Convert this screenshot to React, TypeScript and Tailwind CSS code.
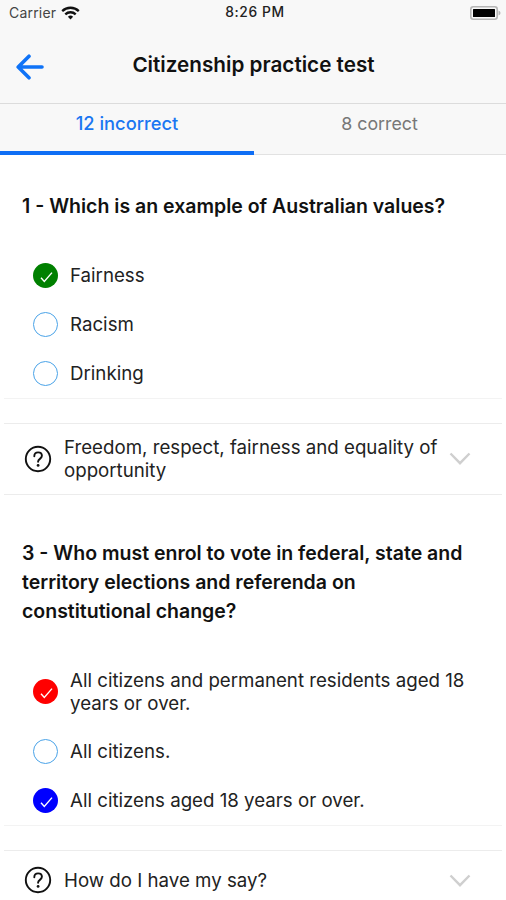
import React from "react";

type Mark = "none" | "green" | "red" | "blue";

interface Option {
  text: string;
  mark: Mark;
}

interface Question {
  id: number;
  title: string;
  options: Option[];
  hint: string;
}

const questions: Question[] = [
  {
    id: 1,
    title: "Which is an example of Australian values?",
    options: [
      { text: "Fairness", mark: "green" },
      { text: "Racism", mark: "none" },
      { text: "Drinking", mark: "none" },
    ],
    hint: "Freedom, respect, fairness and equality of opportunity",
  },
  {
    id: 3,
    title:
      "Who must enrol to vote in federal, state and territory elections and referenda on constitutional change?",
    options: [
      {
        text: "All citizens and permanent residents aged 18 years or over.",
        mark: "red",
      },
      { text: "All citizens.", mark: "none" },
      { text: "All citizens aged 18 years or over.", mark: "blue" },
    ],
    hint: "How do I have my say?",
  },
];

const markColors: Record<Mark, string> = {
  none: "border border-[#4aa3e8] bg-white",
  green: "bg-[#008000]",
  red: "bg-[#ff0000]",
  blue: "bg-[#0000ff]",
};

const StatusBar: React.FC = () => (
  <div className="grid h-[26px] grid-cols-3 items-center pl-[9px] pr-[5px] leading-none">
    <div className="flex items-center gap-[5px] text-[#444]">
      <span className="text-[14px] tracking-[0.2px]">Carrier</span>
      <svg width="19" height="14" viewBox="0 0 19 14" fill="none" stroke="#111" strokeWidth="2.3">
        <path d="M1.2 5.1a12 12 0 0 1 16.6 0" />
        <path d="M4.3 8.4a7.4 7.4 0 0 1 10.4 0" />
        <path d="M9.5 13.4L6.9 10.8a3.7 3.7 0 0 1 5.2 0z" fill="#111" stroke="none" />
      </svg>
    </div>
    <span className="text-center text-[13.8px] font-medium tracking-[0.6px] text-[#222]">8:26 PM</span>
    <svg className="justify-self-end" width="31" height="14" viewBox="0 0 31 14">
      <rect x="0.8" y="0.8" width="26.4" height="12.4" rx="2.5" fill="#f8f8f8" stroke="#b5b5b5" strokeWidth="1.6" />
      <rect x="3" y="3" width="22" height="8" rx="0.5" fill="#000" />
      <path d="M28.5 4.5q2 .8 2 2.5t-2 2.5z" fill="#b5b5b5" />
    </svg>
  </div>
);

const Header: React.FC = () => (
  <div className="grid h-[78px] grid-cols-[60px_1fr_60px] items-center border-b border-[#dcdcdc]">
    <button type="button" aria-label="Back" className="ml-4 mt-[4px]">
      <svg width="28" height="26" viewBox="0 0 28 26" fill="none" stroke="#0f73f7" strokeWidth="3.6" strokeLinecap="round" strokeLinejoin="round">
        <path d="M26 13H2.4M13 2.2L2.2 13L13 23.8" />
      </svg>
    </button>
    <h1 className="ml-[1px] text-center text-[20.7px] font-semibold text-[#111]">
      Citizenship practice test
    </h1>
  </div>
);

const Tabs: React.FC = () => (
  <div className="grid h-[51px] grid-cols-2 border-b border-[#e2e2e2] text-[18px]">
    <button type="button" className="-mb-px mr-[-1px] border-b-4 border-[#0f6ef5] pb-2 text-[18.3px] font-medium text-[#1a76f2]">
      12 incorrect
    </button>
    <button type="button" className="pb-[10px] text-[17.8px] text-[#777]">
      8 correct
    </button>
  </div>
);

const OptionRow: React.FC<{ option: Option }> = ({ option }) => (
  <div className="flex min-h-[49px] items-center gap-3 py-3 pl-[33px] pr-6">
    <span className={`flex h-[25px] w-[25px] shrink-0 items-center justify-center rounded-full ${markColors[option.mark]}`}>
      {option.mark !== "none" && (
        <svg className="ml-0.5 mt-0.5" width="13" height="12" viewBox="0 0 13 12" fill="none" stroke="#fff" strokeWidth="1.4">
          <path d="M1 6.8L4.3 10.4L12 1.6" />
        </svg>
      )}
    </span>
    <span className="text-[18.7px] leading-[23.2px] text-[#222]">{option.text}</span>
  </div>
);

const HintRow: React.FC<{ text: string }> = ({ text }) => (
  <button
    type="button"
    className="mx-1 mt-6 flex min-h-[61px] w-[498px] items-center border-y border-[#ececec] py-3 pl-5 pr-[31px] text-left"
  >
    <svg className="mb-px shrink-0" width="28" height="28" viewBox="0 0 28 28" fill="none" stroke="#111" strokeWidth="1.9" strokeLinecap="round">
      <circle cx="14" cy="14" r="12.2" />
      <path d="M10.3 11.2c0-2.4 1.5-3.8 3.8-3.8s3.8 1.4 3.8 3.4c0 3-3.8 3.1-3.8 5.7v.3" />
      <circle cx="14.1" cy="20.4" r="1.4" fill="#111" stroke="none" />
    </svg>
    <span className="ml-3 w-[380px] text-[18.7px] leading-[23px] text-[#222]">{text}</span>
    <svg className="ml-auto shrink-0" width="22" height="14" viewBox="0 0 22 14" fill="none" stroke="#cfcfcf" strokeWidth="2.4">
      <path d="M1.5 1.5L11 11.2L20.5 1.5" />
    </svg>
  </button>
);

const QuestionCard: React.FC<{ question: Question }> = ({ question }) => (
  <section>
    <h2 className="px-[22px] text-[19.5px] font-semibold leading-[29.3px] text-[#111]">
      {`${question.id} - ${question.title}`}
    </h2>
    <div className="mt-[30px]">
      {question.options.map((option) => (
        <OptionRow key={option.text} option={option} />
      ))}
    </div>
    <div className="mx-1 border-b border-[#f3f3f3]" />
    <HintRow text={question.hint} />
  </section>
);

const App: React.FC = () => {
  return (
    <div className="h-[900px] w-[506px] overflow-hidden bg-white font-['Inter','Liberation_Sans',sans-serif]">
      <header className="bg-[#f8f8f8]">
        <StatusBar />
        <Header />
        <Tabs />
      </header>

      <main className="flex flex-col gap-[43.5px] pt-[37px]">
        {questions.map((question) => (
          <QuestionCard key={question.id} question={question} />
        ))}
      </main>
    </div>
  );
};

export default App;
